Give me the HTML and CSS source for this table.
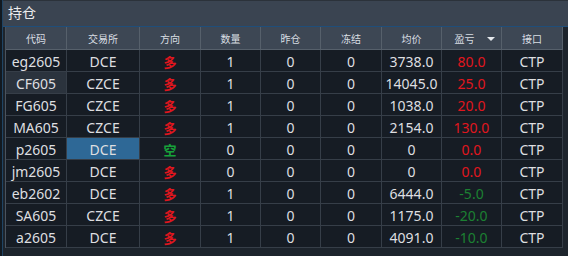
FILE: index.html
```html
<!DOCTYPE html>
<html lang="zh">
<head>
<meta charset="utf-8">
<title>持仓</title>
<link rel="stylesheet" href="styles.css">
</head>
<body>
<div class="frame">
  <div class="panel">
    <div class="titlebar">持仓</div>
    <div class="content">
      <div class="grid">
        <div class="hd">代码</div>
        <div class="hd">交易所</div>
        <div class="hd">方向</div>
        <div class="hd">数量</div>
        <div class="hd">昨仓</div>
        <div class="hd">冻结</div>
        <div class="hd">均价</div>
        <div class="hd sorted">盈亏<span class="arrow"></span></div>
        <div class="hd">接口</div>

        <div class="c">eg2605</div><div class="c">DCE</div><div class="c dir long">多</div><div class="c">1</div><div class="c">0</div><div class="c">0</div><div class="c">3738.0</div><div class="c up">80.0</div><div class="c">CTP</div>

        <div class="c hover">CF605</div><div class="c">CZCE</div><div class="c dir long">多</div><div class="c">1</div><div class="c">0</div><div class="c">0</div><div class="c">14045.0</div><div class="c up">25.0</div><div class="c">CTP</div>

        <div class="c">FG605</div><div class="c">CZCE</div><div class="c dir long">多</div><div class="c">1</div><div class="c">0</div><div class="c">0</div><div class="c">1038.0</div><div class="c up">20.0</div><div class="c">CTP</div>

        <div class="c">MA605</div><div class="c">CZCE</div><div class="c dir long">多</div><div class="c">1</div><div class="c">0</div><div class="c">0</div><div class="c">2154.0</div><div class="c up">130.0</div><div class="c">CTP</div>

        <div class="c">p2605</div><div class="c selected">DCE</div><div class="c dir short">空</div><div class="c">0</div><div class="c">0</div><div class="c">0</div><div class="c">0</div><div class="c up">0.0</div><div class="c">CTP</div>

        <div class="c">jm2605</div><div class="c">DCE</div><div class="c dir long">多</div><div class="c">0</div><div class="c">0</div><div class="c">0</div><div class="c">0</div><div class="c up">0.0</div><div class="c">CTP</div>

        <div class="c">eb2602</div><div class="c">DCE</div><div class="c dir long">多</div><div class="c">1</div><div class="c">0</div><div class="c">0</div><div class="c">6444.0</div><div class="c down">-5.0</div><div class="c">CTP</div>

        <div class="c">SA605</div><div class="c">CZCE</div><div class="c dir long">多</div><div class="c">1</div><div class="c">0</div><div class="c">0</div><div class="c">1175.0</div><div class="c down">-20.0</div><div class="c">CTP</div>

        <div class="c">a2605</div><div class="c">DCE</div><div class="c dir long">多</div><div class="c">1</div><div class="c">0</div><div class="c">0</div><div class="c">4091.0</div><div class="c down">-10.0</div><div class="c">CTP</div>
      </div>
    </div>
  </div>
</div>
</body>
</html>
```
FILE: styles.css
```css
* { box-sizing: border-box; }
html, body {
  margin: 0;
  padding: 0;
  width: 568px;
  height: 256px;
  overflow: hidden;
  background: #121920;
  font-family: "Noto Sans", "Noto Sans CJK SC", sans-serif;
}
.frame {
  height: 256px;
  padding-left: 2px;
}
.panel {
  height: 256px;
  border-left: 1px solid #1f4464;
  background: #1d242c;
  display: flex;
  flex-direction: column;
}
.titlebar {
  height: 27px;
  background: #3a4451;
  border-top: 1px solid #2b323a;
  border-bottom: 1px solid #1f4e7a;
  color: #ececec;
  font-size: 14px;
  line-height: 24px;
  padding-left: 5px;
}
.content {
  flex: 1;
  padding-left: 2px;
  background: #1d242c;
}
.grid {
  display: grid;
  grid-template-columns: 61px 73px 61px 60px 60px 61px 60px 60px 61px;
  grid-template-rows: 23px;
  grid-auto-rows: 22px;
  width: 558px;
  border-left: 1px solid #4a535e;
  background: #161c24;
}
.hd {
  height: 23px;
  background: #3d4754;
  color: #d9dee3;
  font-size: 10px;
  font-family: "Noto Sans CJK SC", sans-serif;
  display: flex;
  align-items: center;
  justify-content: center;
  border-right: 1px solid #56606b;
  border-bottom: 1px solid #56606b;
  position: relative;
  padding-top: 1px;
}
.sorted { padding-right: 14px; }
.arrow {
  position: absolute;
  right: 6px;
  top: 10px;
  width: 0;
  height: 0;
  border-left: 4px solid transparent;
  border-right: 4px solid transparent;
  border-top: 4px solid #e4e8ec;
}
.c {
  background: #161c24;
  color: #dedfe0;
  font-size: 14px;
  display: flex;
  align-items: center;
  justify-content: center;
  border-right: 1px solid #363e48;
  border-bottom: 1px solid #363e48;
  padding-top: 1px;
}
.c.hover { background: #2b333d; }
.c.selected { background: #2e6896; }
.dir {
  font-family: "Noto Sans CJK SC", sans-serif;
  font-weight: bold;
  font-size: 13px;
}
.long { color: #e0161e; }
.short { color: #17a23a; }
.up { color: #e0161e; }
.down { color: #1c8032; }
```
